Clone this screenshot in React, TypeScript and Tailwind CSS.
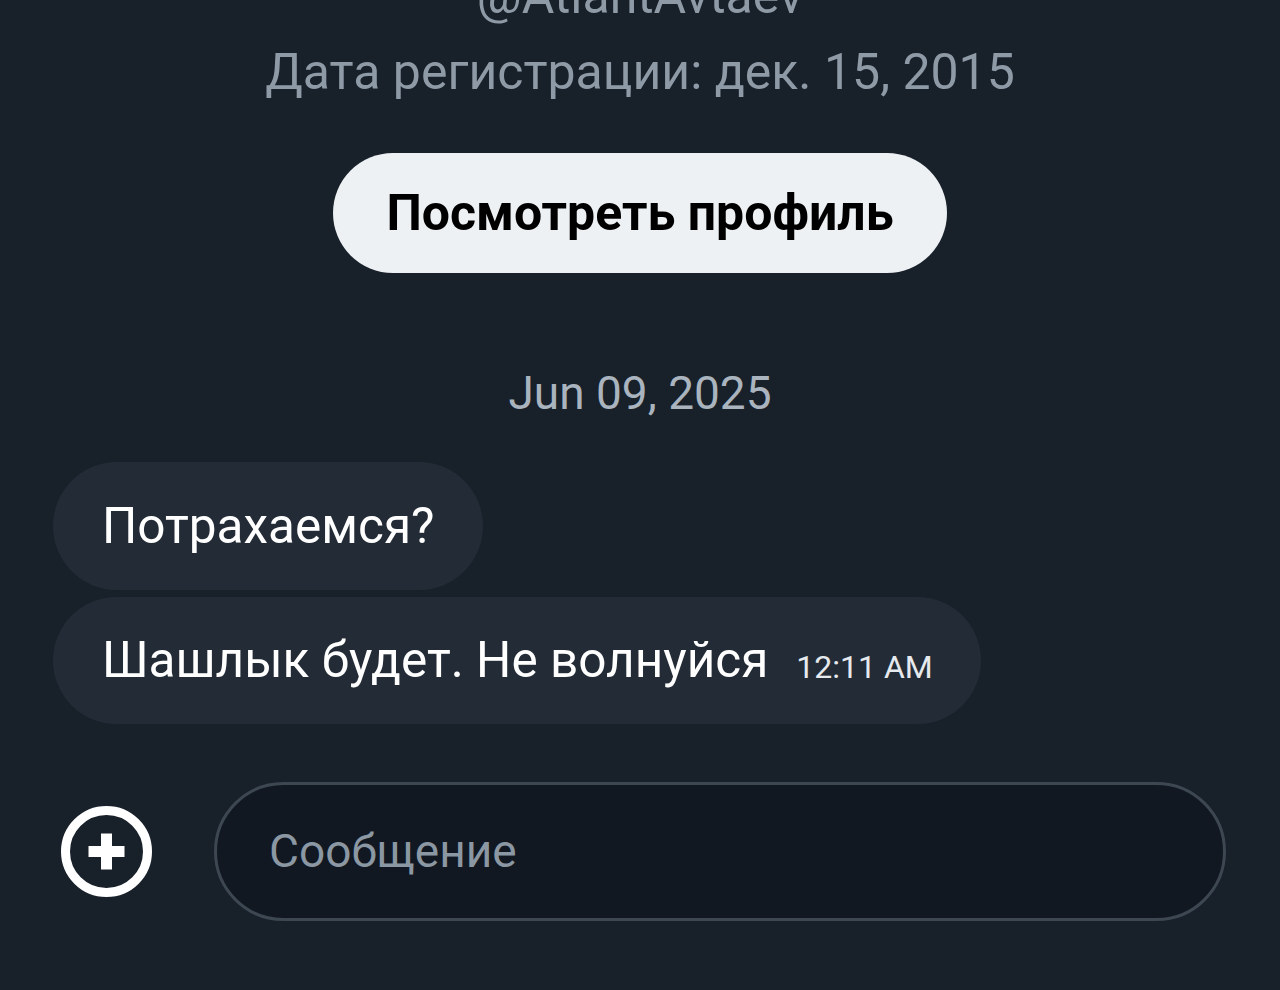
import React from "react";

export default function App() {
  return (
    <div
      className="w-[1280px] h-[990px] bg-[#18202a] overflow-hidden relative flex flex-col"
      style={{ fontFamily: "Roboto, 'Noto Sans', sans-serif" }}
    >
      <div className="flex flex-col items-center mt-[-34px]">
        <div className="text-[50px] leading-[60px] text-[#8e9aa6]">@AtlantAvtaev</div>
        <div className="text-[50px] leading-[60px] text-[#8e9aa6] mt-[16px]">
          Дата регистрации: дек. 15, 2015
        </div>
        <button className="mt-[51px] w-[614px] h-[120px] rounded-full bg-[#eef1f3] text-black text-[50px] font-bold flex items-center justify-center">
          Посмотреть профиль
        </button>
        <div className="mt-[92px] text-[46px] leading-[56px] text-[#a9b4be]">Jun 09, 2025</div>
      </div>
      <div className="flex flex-col items-start gap-[7px] mt-[41px] pl-[53px]">
        <div className="h-[128px] rounded-full bg-[#232c36] px-[49px] flex items-center text-white text-[49.5px]">
          Потрахаемся?
        </div>
        <div className="h-[127px] rounded-full bg-[#232c36] pl-[49px] pr-[48px] flex items-center text-white">
          <span className="text-[49.5px]">Шашлык будет. Не волнуйся</span>
          <span className="text-[32px] ml-[28px] mt-[12px] text-[#e6eaee]">12:11 AM</span>
        </div>
      </div>
      <div className="flex items-center mt-[58px] pl-[61px] pr-[54px]">
        <svg width="91" height="91" viewBox="0 0 91 91" className="shrink-0">
          <circle cx="45.5" cy="45.5" r="41" fill="none" stroke="#fff" strokeWidth="9" />
          <path d="M45.5 27.5 V63.5 M27.5 45.5 H63.5" stroke="#fff" strokeWidth="11" />
        </svg>
        <div className="ml-[62px] flex-1 h-[139px] rounded-full border-[3px] border-[#3d4752] bg-[#111821] flex items-center pl-[52px] text-[46px] text-[#8b97a2]">
          Сообщение
        </div>
      </div>
    </div>
  );
}
